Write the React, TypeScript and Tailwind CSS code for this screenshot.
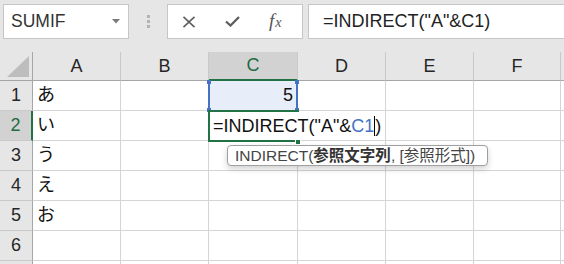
import { ReactNode } from 'react';

const cols = ['A', 'B', 'C', 'D', 'E', 'F', 'G'];
const widths = ['w-[88px]', 'w-[88px]', 'w-[89px]', 'w-[88px]', 'w-[88px]', 'w-[87px]', 'w-[88px]'];
const kana = ['あ', 'い', 'う', 'え', 'お', '', ''];

function HeaderCell({ children, w, active }: { children: ReactNode; w: string; active?: boolean }) {
  return (
    <div
      className={`${w} shrink-0 h-full flex items-center justify-center border-r border-[#c9c9c9] text-[18px] ${
        active ? 'bg-[#d2d2d2] text-[#1e6b44] border-b-2 border-b-[#217346]' : 'border-b border-b-[#a6a6a6] text-[#262626]'
      }`}
    >
      {children}
    </div>
  );
}

function Row({ n }: { n: number }) {
  const active = n === 2;
  return (
    <div className="flex h-[30px]">
      <div
        className={`w-[33px] shrink-0 flex items-center justify-center text-[18px] border-b border-b-[#c9c9c9] ${
          active
            ? 'bg-[#d2d2d2] text-[#1e6b44] border-r-2 border-r-[#217346]'
            : 'bg-[#e6e6e6] text-[#262626] border-r border-r-[#a6a6a6]'
        }`}
      >
        {n < 7 ? n : ''}
      </div>
      {cols.map((c, i) => (
        <div
          key={c}
          className={`${widths[i]} shrink-0 h-full flex items-center border-r border-b border-[#d4d4d4] px-[4px] text-[18px] text-[#111] ${
            c === 'C' && n === 1 ? 'bg-[#e8eef9] justify-end' : ''
          }`}
        >
          {c === 'A' ? kana[n - 1] : c === 'C' && n === 1 ? '5' : ''}
        </div>
      ))}
    </div>
  );
}

export default function App() {
  return (
    <div className="relative w-[564px] h-[264px] overflow-hidden bg-white font-['Liberation_Sans','Noto_Sans_CJK_JP',sans-serif]">
      {/* formula bar */}
      <div className="flex items-start h-[52px] bg-[#e6e6e6] pt-[4px] pl-[3px]">
        <div className="w-[126px] h-[35px] shrink-0 flex items-center justify-between bg-white border border-[#c6c6c6] pl-[7px] pr-[8px] text-[17.5px] text-[#333]">
          <span>SUMIF</span>
          <svg width="8" height="5" viewBox="0 0 8 5">
            <path d="M0 0 L8 0 L4 4.5 Z" fill="#7a7a7a" />
          </svg>
        </div>
        <div className="w-[38px] h-[35px] shrink-0 flex flex-col items-center justify-center gap-[2px]">
          <div className="w-[3px] h-[3px] bg-[#b3b3b3]" />
          <div className="w-[3px] h-[3px] bg-[#b3b3b3]" />
          <div className="w-[3px] h-[3px] bg-[#b3b3b3]" />
        </div>
        <div className="w-[136px] h-[35px] shrink-0 flex items-center bg-white border border-[#c6c6c6] pl-[14px] gap-[29px]">
          <svg width="14" height="12" viewBox="0 0 14 12">
            <path d="M1.5 0.8 L12.5 11.2 M12.5 0.8 L1.5 11.2" stroke="#5e5e5e" strokeWidth="1.6" />
          </svg>
          <svg width="15" height="11" viewBox="0 0 15 11">
            <path d="M1 5.5 L5.5 9.5 L14 1" stroke="#5e5e5e" strokeWidth="2.3" fill="none" />
          </svg>
          <span className="font-['Liberation_Serif',serif] italic text-[19px] text-[#555] leading-none -mt-[2px]">
            f<span className="text-[14px] ml-[1px]">x</span>
          </span>
        </div>
        <div className="ml-[5px] flex-1 h-[35px] flex items-center bg-white border border-[#c6c6c6] border-r-0 pl-[14px] text-[18px] text-[#222] whitespace-nowrap">
          =INDIRECT("A"&amp;C1)
        </div>
      </div>

      {/* column headers */}
      <div className="flex h-[29px] bg-[#e6e6e6]">
        <div className="w-[33px] shrink-0 h-full flex items-end justify-end border-r border-b border-[#a6a6a6] pr-[3px] pb-[3px]">
          <svg width="22" height="21" viewBox="0 0 22 21">
            <path d="M22 0 L22 21 L0 21 Z" fill="#bdbdbd" />
          </svg>
        </div>
        {cols.map((c, i) => (
          <HeaderCell key={c} w={widths[i]} active={c === 'C'}>
            {c === 'G' ? '' : c}
          </HeaderCell>
        ))}
      </div>

      {[1, 2, 3, 4, 5, 6, 7].map((n) => (
        <Row key={n} n={n} />
      ))}

      {/* reference range C1 */}
      <div className="absolute left-[208px] top-[81px] w-[2px] h-[30px] bg-[#4472c4]" />
      <div className="absolute left-[296px] top-[81px] w-[2px] h-[30px] bg-[#4472c4]" />
      <div className="absolute left-[207px] top-[80px] w-[4px] h-[4px] bg-[#4472c4]" />
      <div className="absolute left-[295px] top-[80px] w-[4px] h-[4px] bg-[#4472c4]" />
      <div className="absolute left-[207px] top-[108px] w-[4px] h-[4px] bg-[#4472c4]" />
      <div className="absolute left-[295px] top-[108px] w-[4px] h-[4px] bg-[#4472c4]" />

      {/* active cell C2 */}
      <div className="absolute left-[208px] top-[110px] w-[91px] h-[32px] border-2 border-[#217346]" />
      <div className="absolute left-[295px] top-[139px] w-[6px] h-[6px] bg-[#217346] border border-white" />

      {/* in-cell editor */}
      <div className="absolute left-[210px] top-[112px] w-[174px] h-[28px] bg-white flex items-center pl-[3px] text-[18px] text-[#111] whitespace-nowrap">
        =INDIRECT("A"&amp;<span className="text-[#4472c4]">C1</span>
        <span className="inline-block w-px h-[20px] bg-black" />)
      </div>

      {/* function tooltip */}
      <div className="absolute left-[227px] top-[145px] w-[261px] h-[21px] flex items-center bg-white border border-[#a0a0a0] rounded-[4px] shadow-[0_3px_6px_rgba(0,0,0,0.18)] pl-[7px] text-[15.5px] text-[#444] whitespace-nowrap">
        INDIRECT(<span className="font-bold text-[#333]">参照文字列</span>, [参照形式])
      </div>
    </div>
  );
}
